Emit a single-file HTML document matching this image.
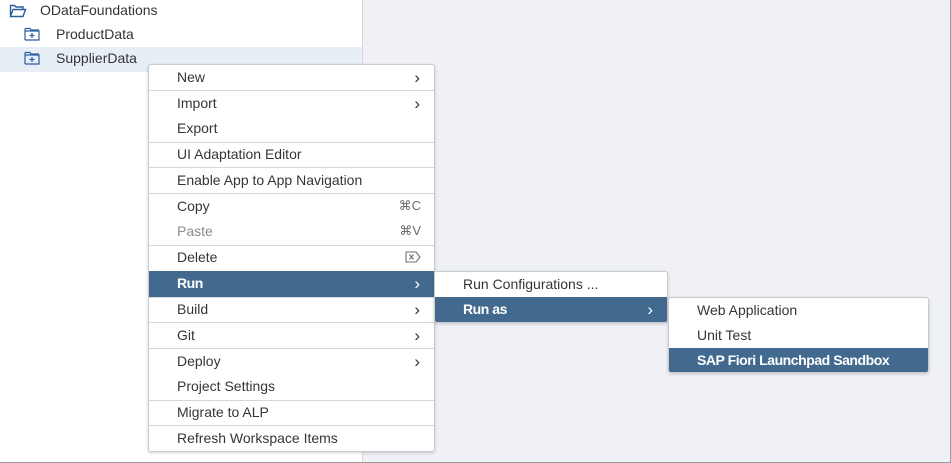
<!DOCTYPE html>
<html><head><style>
*{margin:0;padding:0;box-sizing:border-box}
body{width:951px;height:463px;overflow:hidden;background:#fff;font-family:"Liberation Sans",Arial,sans-serif;font-size:14px;color:#32363a;position:relative}
.frame{position:absolute;left:0;top:0;width:951px;height:463px;border:1px solid #9a9a9a;border-top:none;border-left:none}
.right{position:absolute;left:362px;top:0;width:589px;height:463px;background:#eff1f6;border-left:1px solid #d9d9d9}
.sel{position:absolute;left:0;top:47px;width:362px;height:25px;background:#e8eef5}
.t{position:absolute;white-space:nowrap}
.menu{position:absolute;background:#fff;border:1px solid #c9cdd2;border-radius:3px;box-shadow:0 1px 3px rgba(0,0,0,.18)}
.it{position:absolute;left:0;right:0;height:26px;line-height:24px;white-space:nowrap}
.it span.l{position:absolute;left:28px}
.hl{background:#426a8e;color:#fff;font-weight:bold}
.hl span.l{letter-spacing:-0.45px}
.sep{position:absolute;left:0;right:0;height:1px;background:#d4d7da}
.ar{position:absolute;right:14px;font-size:17px;top:1px;font-weight:normal}
.sc{position:absolute;right:13px;color:#6a6d70;font-size:13px}
.dis{color:#8a8d90}
</style></head><body>
<div class="sel"></div>
<div class="right"></div>
<div class="frame"></div>
<svg style="position:absolute;left:9px;top:4px" width="18" height="14" viewBox="0 0 18 14"><path d="M1.5 12.5V1.5h4l1.5 1.5h7v2.5M1.5 12.5l2.5-7h12.5l-2.5 7z" fill="none" stroke="#2b5f9e" stroke-width="1.4"/></svg>
<div class="t" style="left:40px;top:2px">ODataFoundations</div>
<svg style="position:absolute;left:24px;top:27px" width="16" height="14" viewBox="0 0 16 14"><path d="M1 1.5h5l1 1.5h8M1 13V1.5M1 13h14V4H1" fill="none" stroke="#2b5f9e" stroke-width="1.2"/><path d="M8 6v5M5.5 8.5h5" stroke="#2b5f9e" stroke-width="1.2"/></svg>
<div class="t" style="left:56px;top:26px">ProductData</div>
<svg style="position:absolute;left:24px;top:51px" width="16" height="14" viewBox="0 0 16 14"><path d="M1 1.5h5l1 1.5h8M1 13V1.5M1 13h14V4H1" fill="none" stroke="#2b5f9e" stroke-width="1.2"/><path d="M8 6v5M5.5 8.5h5" stroke="#2b5f9e" stroke-width="1.2"/></svg>
<div class="t" style="left:56px;top:50px">SupplierData</div>

<div class="menu" style="left:148px;top:64px;width:287px;height:388px">
<div class="it" style="top:0"><span class="l">New</span><span class="ar">›</span></div>
<div class="sep" style="top:25px"></div>
<div class="it" style="top:26px"><span class="l">Import</span><span class="ar">›</span></div>
<div class="it" style="top:51px"><span class="l">Export</span></div>
<div class="sep" style="top:77px"></div>
<div class="it" style="top:77px"><span class="l">UI Adaptation Editor</span></div>
<div class="sep" style="top:102px"></div>
<div class="it" style="top:103px"><span class="l">Enable App to App Navigation</span></div>
<div class="sep" style="top:128px"></div>
<div class="it" style="top:129px"><span class="l">Copy</span><span class="sc">⌘C</span></div>
<div class="it dis" style="top:154px"><span class="l">Paste</span><span class="sc">⌘V</span></div>
<div class="sep" style="top:180px"></div>
<div class="it" style="top:180px"><span class="l">Delete</span><svg style="position:absolute;right:13px;top:6px" width="16" height="12" viewBox="0 0 16 12"><path d="M1 1h10l4 5-4 5H1z M4.5 3.5l4 5M8.5 3.5l-4 5" fill="none" stroke="#6a6d70" stroke-width="1.1"/></svg></div>
<div class="it hl" style="top:206px"><span class="l">Run</span><span class="ar">›</span></div>
<div class="sep" style="top:232px"></div>
<div class="it" style="top:232px"><span class="l">Build</span><span class="ar">›</span></div>
<div class="sep" style="top:257px"></div>
<div class="it" style="top:258px"><span class="l">Git</span><span class="ar">›</span></div>
<div class="sep" style="top:283px"></div>
<div class="it" style="top:284px"><span class="l">Deploy</span><span class="ar">›</span></div>
<div class="it" style="top:309px"><span class="l">Project Settings</span></div>
<div class="sep" style="top:335px"></div>
<div class="it" style="top:335px"><span class="l">Migrate to ALP</span></div>
<div class="sep" style="top:360px"></div>
<div class="it" style="top:361px"><span class="l">Refresh Workspace Items</span></div>
</div>

<div class="menu" style="left:434px;top:271px;width:234px;height:52px;overflow:hidden">
<div class="it" style="top:0"><span class="l">Run Configurations ...</span></div>
<div class="it hl" style="top:25px"><span class="l">Run as</span><span class="ar">›</span></div>
</div>

<div class="menu" style="left:668px;top:297px;width:261px;height:76px;overflow:hidden">
<div class="it" style="top:0"><span class="l">Web Application</span></div>
<div class="it" style="top:25px"><span class="l">Unit Test</span></div>
<div class="it hl" style="top:50px"><span class="l">SAP Fiori Launchpad Sandbox</span></div>
</div>
</body></html>
